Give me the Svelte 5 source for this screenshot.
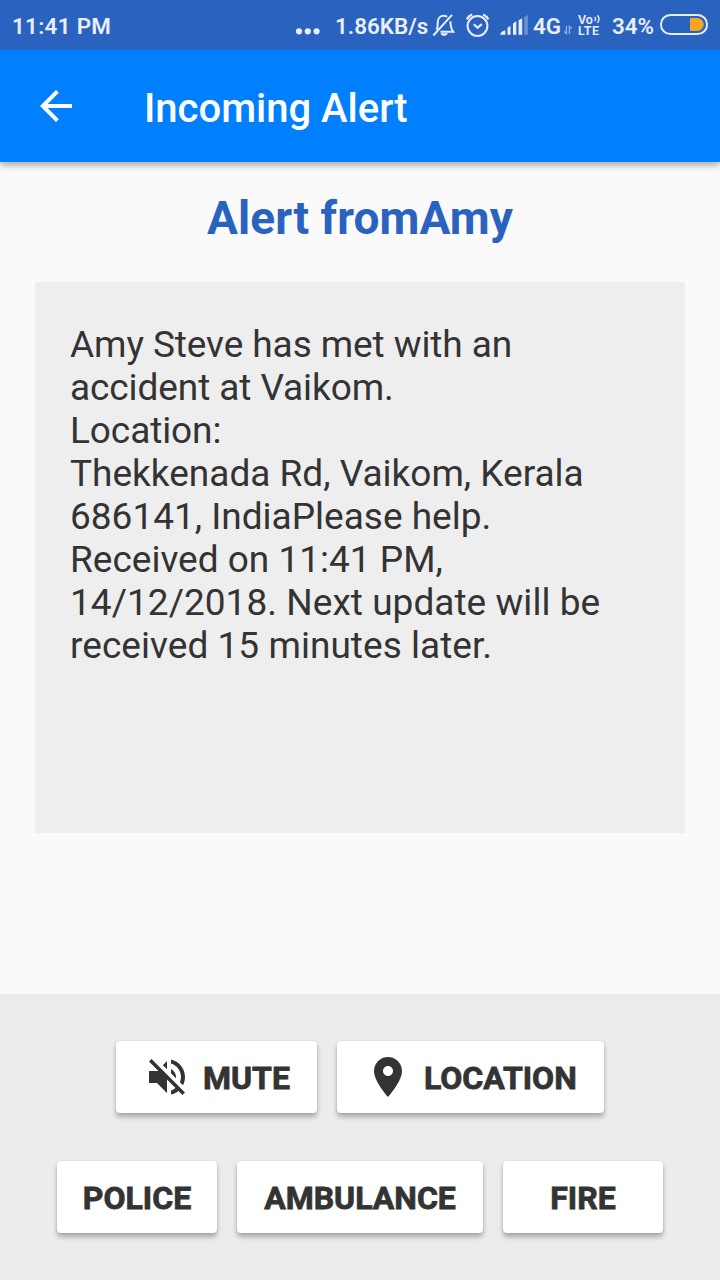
<script>
  const services = [
    { label: 'POLICE', width: 160 },
    { label: 'AMBULANCE', width: 246 },
    { label: 'FIRE', width: 160 }
  ];
</script>

<div class="screen">
  <div class="status">
    <span class="time">11:41 PM</span>
    <svg class="dots" width="26" height="50" viewBox="0 0 26 50"><g fill="#e9eefa"><circle cx="4" cy="31.3" r="3.1" /><circle cx="12.8" cy="31.3" r="3.1" /><circle cx="21.6" cy="31.3" r="3.1" /></g></svg>
    <span class="speed">1.86KB/s</span>
    <svg class="icons" width="100" height="50" viewBox="430 0 100 50" fill="none" stroke="#e9eefa" stroke-width="2">
      <path d="M433.3 35.5L452 14.8M436.5 29.7c1.2-1.8 1.2-4 1.2-7.1c0-4 2.6-6.8 6-6.8c1.3 0 2.5.4 3.4 1.1M450.4 21.2c.3 4.6.1 7.1 2.8 10.5H440.5" />
      <path d="M440.8 33.8h6.6q-3.3 3.3-6.6 0" fill="#e9eefa" stroke-width="1" />
      <circle cx="477.5" cy="26" r="9.9" />
      <path d="M473.8 24.2l3.8 3.5 4.2-3.5M466.8 19.5q1.7-3.7 5.4-5M483 14.5q3.7 1.5 5.4 5" stroke-width="2.2" />
      <g fill="#e9eefa" stroke="none"><path d="M500.5 34.7v-1.5q1.8-2.6 4.8-3v4.5zM507.5 34.7v-7l3-2v9zM513 34.7V23.5l3.3-2.2v13.4zM518.6 34.7V20.3l3.6-2v16.4z" /><path d="M524.3 34.7V17l3.5-2v19.7z" opacity=".35" /></g>
    </svg>
    <span class="net">4G</span>
    <svg class="transfer" width="10" height="50" viewBox="563 0 10 50" fill="none" stroke="#94afdf" stroke-width="1.4"><path d="M566.4 26v7.5l-2.4-2M569.4 34v-7.5l2.4 2" /></svg>
    <span class="volte"><span class="vo">Vo<svg width="7" height="10" viewBox="0 0 7 10" fill="none" stroke="#e9eefa" stroke-width="1.4"><path d="M.7 3q1.7 2 0 4M3.4 1.2q3.2 3.8 0 7.6" /></svg></span><span class="lte">LTE</span></span>
    <span class="percent">34%</span>
    <svg class="battery" width="50" height="50" viewBox="659 0 50 50"><rect x="660.9" y="15" width="46.2" height="19" rx="9.5" fill="none" stroke="#e9eefa" stroke-width="1.9" /><path d="M691 18h6.2a6.5 6.5 0 0 1 0 13H691q-1 0-1-1V19q0-1 1-1z" fill="#f6a623" /></svg>
  </div>

  <header>
    <svg width="48" height="48" viewBox="0 0 24 24" fill="#fff"><path d="M20 11H7.83l5.59-5.59L12 4l-8 8 8 8 1.41-1.41L7.83 13H20v-2z" /></svg>
    <h1>Incoming Alert</h1>
  </header>

  <main>
    <h2>Alert fromAmy</h2>
    <div class="message"><span class="tight">Amy Steve has met with an<br />accident at Vaikom.<br />Location:</span><br />Thekkenada Rd, Vaikom, Kerala<br />686141, IndiaPlease help.<br />Received on 11:41 PM,<br /><span class="wide">14/12/2018. Next update will be<br />received 15 minutes later.</span></div>
  </main>

  <footer>
    <div class="row">
      <button class="mute">
        <svg width="48" height="48" viewBox="0 0 24 24" fill="#333"><path d="M16.5 12c0-1.77-1.02-3.29-2.5-4.03v2.21l2.45 2.45c.03-.2.05-.41.05-.63zm2.5 0c0 .94-.2 1.82-.54 2.64l1.51 1.51C20.63 14.91 21 13.5 21 12c0-4.28-2.99-7.86-7-8.77v2.06c2.89.86 5 3.54 5 6.71zM4.27 3L3 4.27 7.73 9H3v6h4l5 5v-6.73l4.25 4.25c-.67.52-1.42.93-2.25 1.18v2.06c1.38-.31 2.63-.95 3.69-1.81L19.73 21 21 19.73l-9-9L4.27 3zM12 4L9.91 6.09 12 8.18V4z" /></svg>
        <span>MUTE</span>
      </button>
      <button class="location">
        <svg width="48" height="48" viewBox="0 0 24 24" fill="#333"><path d="M12 2C8.13 2 5 5.13 5 9c0 5.25 7 13 7 13s7-7.75 7-13c0-3.87-3.13-7-7-7zm0 9.5c-1.38 0-2.5-1.12-2.5-2.5s1.12-2.5 2.5-2.5 2.5 1.12 2.5 2.5-1.12 2.5-2.5 2.5z" /></svg>
        <span>LOCATION</span>
      </button>
    </div>
    <div class="row">
      {#each services as service}
        <button class="service" style="width: {service.width}px"><span>{service.label}</span></button>
      {/each}
    </div>
  </footer>
</div>

<style>
  .screen {
    width: 720px;
    height: 1280px;
    display: flex;
    flex-direction: column;
    background: #fafafa;
    font-family: Roboto, sans-serif;
    color: #333;
    overflow: hidden;
  }
  svg { display: block; flex: none; }
  .status {
    height: 50px;
    flex: none;
    display: flex;
    background: #2962bf;
    color: #e9eefa;
    font-size: 22.4px;
    font-weight: 600;
    line-height: 52px;
    white-space: nowrap;
  }
  .status > span { flex: none; }
  .time { width: 283px; padding-left: 12px; letter-spacing: 0.3px; }
  .dots { margin-right: 14px; }
  .speed { width: 95px; }
  .net { width: 30px; margin-left: 3px; }
  .volte {
    width: 35px;
    margin-left: 5px;
    padding-top: 14px;
    font-size: 12.5px;
  }
  .vo { display: flex; height: 11px; line-height: 11px; }
  .vo svg { margin-left: 1px; }
  .lte { display: block; height: 11px; line-height: 12px; letter-spacing: 0.5px; }
  .percent { width: 47px; margin-left: -1px; }
  header {
    height: 112px;
    flex: none;
    display: flex;
    align-items: center;
    padding-left: 32px;
    background: #0080ff;
    box-shadow: 0 3px 7px rgba(0, 0, 0, 0.34);
    z-index: 1;
    clip-path: inset(0 0 -20px 0);
  }
  h1 {
    margin: 6px 0 0 64px;
    color: #fff;
    font-size: 40px;
    line-height: 48px;
    font-weight: 500;
    white-space: nowrap;
  }
  main { flex: 1; padding: 28px 35px 0; }
  h2 {
    margin: 0 0 36px;
    text-align: center;
    color: #2962bf;
    font-size: 46px;
    line-height: 56px;
    font-weight: 700;
    letter-spacing: 0.1px;
  }
  .message {
    box-sizing: border-box;
    height: 551px;
    padding: 41px 35px;
    background: #eee;
    font-size: 37px;
    line-height: 43px;
    white-space: nowrap;
  }
  .tight { letter-spacing: -0.09px; }
  .wide { letter-spacing: 0.04px; }
  footer {
    box-sizing: border-box;
    height: 286px;
    flex: none;
    display: flex;
    flex-direction: column;
    gap: 48px;
    padding-top: 47px;
    background: #ececec;
  }
  .row { display: flex; justify-content: center; gap: 20px; }
  button {
    height: 72px;
    display: flex;
    align-items: center;
    padding: 0;
    border: 0;
    border-radius: 4px;
    background: #fff;
    box-shadow: 0 4px 5px rgba(0, 0, 0, 0.28), 0 0 2px rgba(0, 0, 0, 0.13);
    color: #333;
    font: 700 32px/40px Roboto, sans-serif;
    -webkit-text-stroke: 0.8px #333;
    white-space: nowrap;
  }
  button span { margin-top: 2px; }
  .mute { width: 201px; padding-left: 27px; gap: 12px; }
  .location { width: 267px; padding-left: 27px; gap: 12px; }
  .service { justify-content: center; }
</style>
